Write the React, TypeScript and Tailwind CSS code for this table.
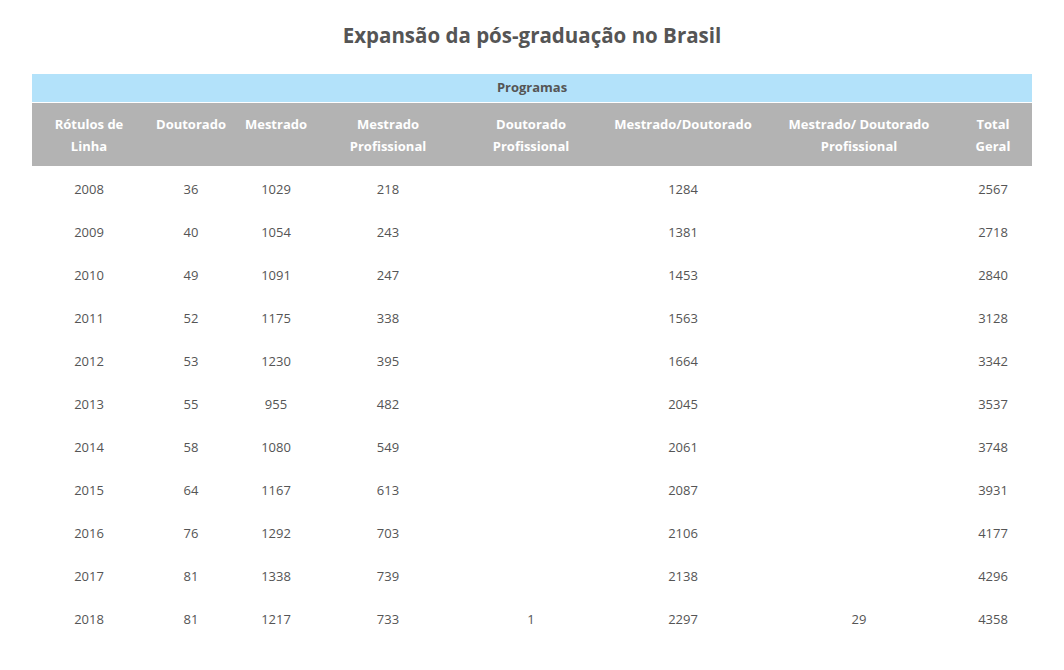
const columns = [
  { label: ["Rótulos de", "Linha"], width: "w-[114px]" },
  { label: ["Doutorado"], width: "w-[90px]" },
  { label: ["Mestrado"], width: "w-[80px]" },
  { label: ["Mestrado", "Profissional"], width: "w-[144px]" },
  { label: ["Doutorado", "Profissional"], width: "w-[142px]" },
  { label: ["Mestrado/Doutorado"], width: "w-[162px]" },
  { label: ["Mestrado/ Doutorado", "Profissional"], width: "w-[190px]" },
  { label: ["Total", "Geral"], width: "w-[78px]" },
];

const rows = [
  ["2008", "36", "1029", "218", "", "1284", "", "2567"],
  ["2009", "40", "1054", "243", "", "1381", "", "2718"],
  ["2010", "49", "1091", "247", "", "1453", "", "2840"],
  ["2011", "52", "1175", "338", "", "1563", "", "3128"],
  ["2012", "53", "1230", "395", "", "1664", "", "3342"],
  ["2013", "55", "955", "482", "", "2045", "", "3537"],
  ["2014", "58", "1080", "549", "", "2061", "", "3748"],
  ["2015", "64", "1167", "613", "", "2087", "", "3931"],
  ["2016", "76", "1292", "703", "", "2106", "", "4177"],
  ["2017", "81", "1338", "739", "", "2138", "", "4296"],
  ["2018", "81", "1217", "733", "1", "2297", "29", "4358"],
];

export default function App() {
  return (
    <div className="min-h-[670px] bg-white font-['Open_Sans',sans-serif] text-[#555]">
      <div className="px-8 pt-[21px]">
        <h1 className="text-center text-[20.5px] font-bold leading-[28px] text-[#555]">
          Expansão da pós-graduação no Brasil
        </h1>

        <table className="mt-[25px] w-[1000px] table-fixed border-collapse text-[13px]">
          <colgroup>
            {columns.map((col) => (
              <col key={col.label.join(" ")} className={col.width} />
            ))}
          </colgroup>
          <thead>
            <tr>
              <th
                colSpan={8}
                className="h-[28px] border-b border-white bg-[#b3e2fa] text-center font-bold leading-[27px] text-[#555]"
              >
                Programas
              </th>
            </tr>
            <tr className="bg-[#b3b3b3]">
              {columns.map((col) => (
                <th
                  key={col.label.join(" ")}
                  className="h-[64px] whitespace-nowrap px-0 pt-[10px] text-center align-top font-bold leading-[22px] text-white"
                >
                  {col.label.map((line) => (
                    <div key={line}>{line}</div>
                  ))}
                </th>
              ))}
            </tr>
          </thead>
          <tbody>
            {rows.map((row) => (
              <tr key={row[0]} className="h-[43px]">
                {row.map((cell, i) => (
                  <td key={i} className="pt-[2px] text-center leading-[20px] text-[#555]">
                    {cell}
                  </td>
                ))}
              </tr>
            ))}
          </tbody>
        </table>
      </div>
    </div>
  );
}
